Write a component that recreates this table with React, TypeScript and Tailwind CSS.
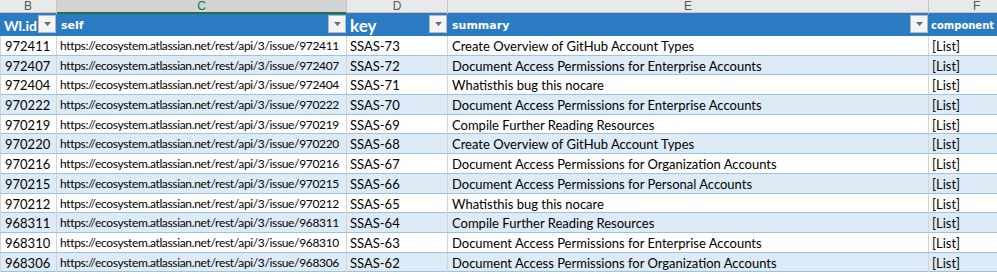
// Linhas da planilha exportada do Jira
const rows = [
  ["972411", "SSAS-73", "Create Overview of GitHub Account Types"],
  ["972407", "SSAS-72", "Document Access Permissions for Enterprise Accounts"],
  ["972404", "SSAS-71", "Whatisthis bug this nocare"],
  ["970222", "SSAS-70", "Document Access Permissions for Enterprise Accounts"],
  ["970219", "SSAS-69", "Compile Further Reading Resources"],
  ["970220", "SSAS-68", "Create Overview of GitHub Account Types"],
  ["970216", "SSAS-67", "Document Access Permissions for Organization Accounts"],
  ["970215", "SSAS-66", "Document Access Permissions for Personal Accounts"],
  ["970212", "SSAS-65", "Whatisthis bug this nocare"],
  ["968311", "SSAS-64", "Compile Further Reading Resources"],
  ["968310", "SSAS-63", "Document Access Permissions for Enterprise Accounts"],
  ["968306", "SSAS-62", "Document Access Permissions for Organization Accounts"],
];

const cols = "grid grid-cols-[57px_290px_101px_481px_68px]";

function FilterButton() {
  return (
    <div className="absolute right-[1px] top-[2px] w-[18px] h-[18px] bg-[#f4f4f4] border border-[#b9b9b9] flex items-center justify-center">
      <svg width="7" height="4" viewBox="0 0 7 4">
        <path d="M0 0h7L3.5 4z" fill="#6b6b6b" />
      </svg>
    </div>
  );
}

export default function App() {
  return (
    <div
      className="w-[997px] h-[274px] overflow-hidden bg-white text-black"
      style={{ fontFamily: "Lato, 'Liberation Sans', sans-serif" }}
    >
      {/* Letras das colunas */}
      <div className={`${cols} h-[13px] bg-[#e9e9e9] border-b border-[#c6c6c6] text-[12px] leading-[12px] text-[#555] font-['Liberation_Sans',sans-serif]`}>
        <div className="border-r border-[#c6c6c6] text-center">B</div>
        <div className="border-r border-[#c6c6c6] text-center bg-[#d3d3d3] text-[#217346] border-b-2 border-b-[#217346]">C</div>
        <div className="border-r border-[#c6c6c6] text-center">D</div>
        <div className="border-r border-[#c6c6c6] text-center">E</div>
        <div className="text-left pl-[44px]">F</div>
      </div>

      {/* Cabeçalho da tabela */}
      <div className={`${cols} h-[23px] bg-[#2b7bc2] text-white`}>
        <div className="relative flex items-center pl-[4px] font-bold text-[14px]">
          Wl.id
          <FilterButton />
        </div>
        <div className="relative flex items-center pl-[4px] font-bold text-[11px] font-['DejaVu_Sans',sans-serif]">
          self
          <FilterButton />
        </div>
        <div className="relative flex items-center pl-[3px] font-bold text-[17px]">
          key
          <FilterButton />
        </div>
        <div className="relative flex items-center pl-[4px] font-bold text-[11px] font-['DejaVu_Sans',sans-serif]">
          summary
          <FilterButton />
        </div>
        <div className="flex items-center pl-[2px] font-bold text-[10px] whitespace-nowrap font-['DejaVu_Sans',sans-serif]">
          component
        </div>
      </div>

      {/* Dados */}
      {rows.map(([id, key, summary], i) => (
        <div
          key={id + key}
          className={`${cols} h-[19.7px] border-b border-[#9bc2e6] text-[13px] leading-[18px] ${
            i % 2 === 0 ? "bg-white" : "bg-[#ddebf7]"
          }`}
        >
          <div className="border-l border-r border-[#d4d4d4] pl-[4px] pt-[1px] whitespace-nowrap">{id}</div>
          <div className="border-r border-[#d4d4d4] pl-[3px] pt-[1px] whitespace-nowrap overflow-hidden text-[12px] tracking-[-0.35px]">
            https://ecosystem.atlassian.net/rest/api/3/issue/{id}
          </div>
          <div className="border-r border-[#d4d4d4] pl-[3px] pt-[1px] whitespace-nowrap">{key}</div>
          <div className="border-r border-[#d4d4d4] pl-[4px] pt-[1px] whitespace-nowrap">{summary}</div>
          <div className="pl-[3px] pt-[1px]">[List]</div>
        </div>
      ))}
    </div>
  );
}
